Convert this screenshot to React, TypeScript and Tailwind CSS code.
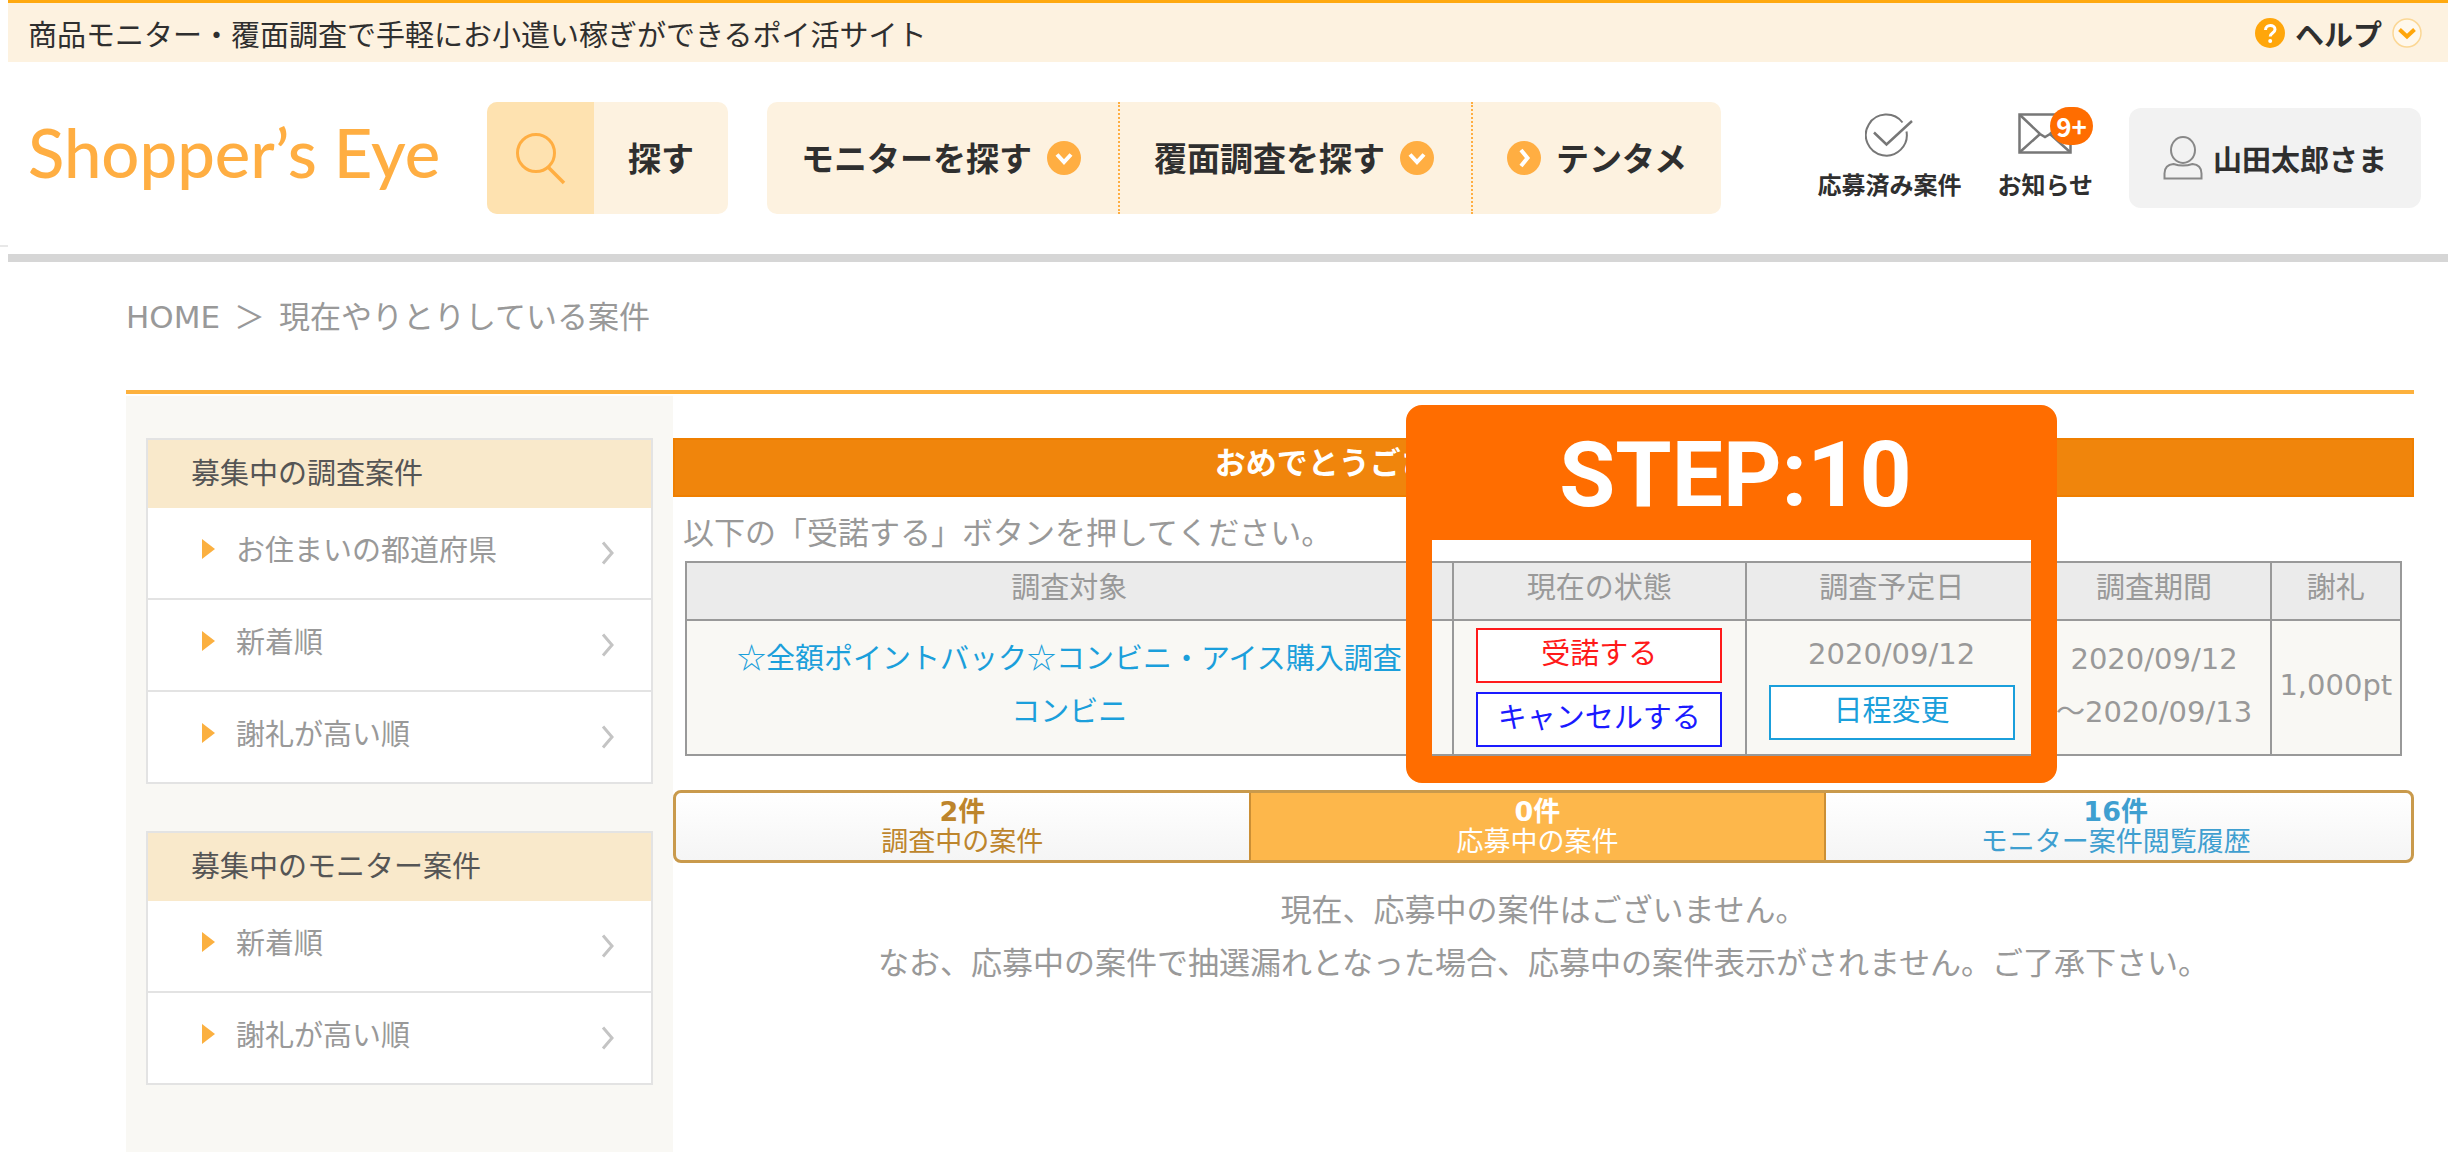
import React from "react";

const ORANGE = "#ffae42";

const menus = [
  {
    title: "募集中の調査案件",
    items: ["お住まいの都道府県", "新着順", "謝礼が高い順"],
  },
  {
    title: "募集中のモニター案件",
    items: ["新着順", "謝礼が高い順"],
  },
];

const CircleArrow = ({ direction }: { direction: "down" | "right" }) => (
  <svg viewBox="0 0 34 34" className="size-[34px] shrink-0" fill="none">
    <circle cx="17" cy="17" r="17" fill={ORANGE} />
    <path
      d={direction === "down" ? "M10 13.5l7 7.5 7-7.5" : "M14 9l6.5 8-6.5 8"}
      stroke="#fff"
      strokeWidth="4"
    />
  </svg>
);

const TopBar = () => (
  <div className="flex h-[62px] items-center justify-between border-t-[3px] border-[#ffa90f] bg-[#fdf2e0] pl-5 pr-[26px] text-[29px] leading-[36px]">
    <p>商品モニター・覆面調査で手軽にお小遣い稼ぎができるポイ活サイト</p>
    <button type="button" className="flex items-center gap-2.5 font-bold">
      <svg viewBox="0 0 30 30" className="size-[30px]" fill="none">
        <circle cx="15" cy="15" r="15" fill="#ffa60a" />
        <path
          d="M10.500 12c0-6 9.500-6 9.500-.5 0 3.500-4.800 3.500-4.800 7"
          stroke="#fff"
          strokeWidth="3"
        />
        <circle cx="15.200" cy="23" r="2" fill="#fff" />
      </svg>
      ヘルプ
      <svg viewBox="0 0 30 30" className="size-[30px]" fill="none">
        <circle cx="15" cy="15" r="14" fill="#fff8ec" stroke="#fbd795" strokeWidth="1.500" />
        <path d="M7.500 11.500l7.500 7 7.500-7" stroke="#ffa60a" strokeWidth="4" />
      </svg>
    </button>
  </div>
);

const Header = () => (
  <header className="flex h-[200px] items-center border-b-8 border-[#d6d6d6] pl-5 pr-[27px] font-bold">
    <a
      href="#"
      className="w-[459px] shrink-0 whitespace-nowrap pb-3 font-['Lato',sans-serif] text-[67px] leading-[80px] font-medium text-[#ffae42]"
    >
      Shopper’s Eye
    </a>

    <button
      type="button"
      className="flex h-28 shrink-0 items-stretch overflow-hidden rounded-[10px] bg-[#fdf2e0] text-[33px]"
    >
      <span className="flex w-[107px] items-center justify-center bg-[#fee2b0]">
        <svg viewBox="0 0 50 54" className="h-[54px] w-[50px]" fill="none" stroke={ORANGE} strokeWidth="3">
          <circle cx="20" cy="22" r="18.500" />
          <path d="M32 36l16 16" strokeWidth="3.500" />
        </svg>
      </span>
      <span className="flex w-[134px] items-center justify-center">探す</span>
    </button>

    <nav className="ml-[39px] flex h-28 shrink-0 rounded-[10px] bg-[#fdf2e0] text-[33px]">
      <button type="button" className="flex items-center gap-[15px] pl-[34px] pr-[37px]">
        モニターを探す
        <CircleArrow direction="down" />
      </button>
      <button
        type="button"
        className="flex items-center gap-[15px] border-l-2 border-dotted border-[#ffae42] pl-[34px] pr-[37px]"
      >
        覆面調査を探す
        <CircleArrow direction="down" />
      </button>
      <a
        href="#"
        className="flex items-center gap-[15px] border-l-2 border-dotted border-[#ffae42] px-[34px]"
      >
        <CircleArrow direction="right" />
        テンタメ
      </a>
    </nav>

    <div className="ml-auto flex shrink-0 items-center gap-9 text-[24px] leading-[30px]">
      <a href="#" className="flex flex-col items-center gap-3 pb-1">
        <svg viewBox="0 0 48 44" className="h-11 w-12" fill="none" stroke="#777" strokeWidth="2">
          <path d="M37.500 9.500a20.500 20.500 0 1 0 4 9" />
          <path d="M9 19.500l12.500 12L47 8" strokeWidth="2.500" />
        </svg>
        応募済み案件
      </a>
      <a href="#" className="relative flex flex-col items-center gap-3 pb-1">
        <svg viewBox="0 0 54 44" className="h-11 w-[54px]" fill="none" stroke="#777" strokeWidth="2.500">
          <rect x="1.500" y="1.500" width="51" height="38" />
          <path d="M2 2l20 19 5 3 5-3L52 2M2 39l20-18M52 39L32 21" />
        </svg>
        お知らせ
        <span className="absolute -top-1.5 right-0 flex h-[38px] w-[43px] items-center justify-center rounded-full bg-[#ff6d00] text-[26px] text-white">
          9+
        </span>
      </a>
      <button
        type="button"
        className="flex h-[100px] items-center gap-2.5 rounded-[12px] bg-[#f2f2f2] px-[34px] text-[29px]"
      >
        <svg viewBox="0 0 40 44" className="h-11 w-10" fill="none" stroke="#888" strokeWidth="2">
          <ellipse cx="20" cy="14" rx="12" ry="13" />
          <path d="M1.500 42.500v-5c0-6 4-9 9-9.500 6 2 13 2 19 0 5 .5 9 3.500 9 9.500v5z" />
        </svg>
        山田太郎さま
      </button>
    </div>
  </header>
);

const Sidebar = () => (
  <aside className="flex w-[547px] shrink-0 flex-col gap-[47px] bg-[#f9f8f4] px-5 pt-[42px] pb-[67px] text-[29px] leading-[36px]">
    {menus.map((menu) => (
      <section key={menu.title} className="border-x-2 border-t-2 border-[#e3e3e3] bg-white">
        <h2 className="bg-[#f9e9cb] py-4 pl-[43px] text-[#555]">{menu.title}</h2>
        <ul>
          {menu.items.map((item) => (
            <li key={item}>
              <a
                href="#"
                className="flex h-[92px] items-center border-b-2 border-[#e3e3e3] pl-[54px] pr-9"
              >
                <svg viewBox="0 0 13 20" className="mb-2 h-5 w-[13px]" fill="#fbb040">
                  <path d="M0 0l13 10-13 10z" />
                </svg>
                <span className="mb-1 ml-[21px] grow">{item}</span>
                <svg viewBox="0 0 14 24" className="h-6 w-3.5" fill="none" stroke="#c4c4c4" strokeWidth="3">
                  <path d="M2 1.500l9 10.500-9 10.500" />
                </svg>
              </a>
            </li>
          ))}
        </ul>
      </section>
    ))}
  </aside>
);

const cell = "border-2 border-[#999] p-0 text-center font-normal";
const headCell = "border-2 border-[#999] px-0 pt-0 pb-1.5 text-center font-normal";
const cellButton = "mx-auto block h-[55px] w-[246px] border-2 bg-white pb-1";

const SurveyTable = () => (
  <div className="relative mx-3">
    <table className="w-full table-fixed border-collapse text-[29px] leading-[53px]">
      <thead>
        <tr className="h-[58px] bg-[#ebebeb] leading-[46px]">
          <th className={`${headCell} w-[44.7%]`}>調査対象</th>
          <th className={`${headCell} w-[17.1%]`}>現在の状態</th>
          <th className={`${headCell} w-[17%]`}>調査予定日</th>
          <th className={`${headCell} w-[13.6%]`}>調査期間</th>
          <th className={`${headCell} w-[7.6%]`}>謝礼</th>
        </tr>
      </thead>
      <tbody>
        <tr className="h-[135px] bg-[#f9f8f4]">
          <td className={cell}>
            <a href="#" className="mb-2.5 block font-['Noto_Sans_CJK_JP',sans-serif] text-[#1b9fdb]">
              ☆全額ポイントバック☆コンビニ・アイス購入調査
              <br />
              コンビニ
            </a>
          </td>
          <td className={cell}>
            <div className="flex flex-col gap-[9px] leading-[48px]">
              <button type="button" className={`${cellButton} border-[#ff1a1a] text-[#ff1a1a]`}>
                受諾する
              </button>
              <button type="button" className={`${cellButton} border-[#1a1aff] text-[#1a1aff]`}>
                キャンセルする
              </button>
            </div>
          </td>
          <td className={cell}>
            <div className="pb-1">2020/09/12</div>
            <button
              type="button"
              className={`${cellButton} mb-2 border-[#1b9fdb] leading-[48px] text-[#1b9fdb]`}
            >
              日程変更
            </button>
          </td>
          <td className={cell}>
            <div className="mb-1">
              2020/09/12
              <br />
              ～2020/09/13
            </div>
          </td>
          <td className={cell}>
            <div className="mb-1">1,000pt</div>
          </td>
        </tr>
      </tbody>
    </table>

    {/* step callout framing the status and date columns */}
    <div className="pointer-events-none absolute -top-[156px] left-[42%] h-[378px] w-[37.9%] rounded-[16px] border-x-[26px] border-t-[135px] border-b-[27px] border-[#ff6d00]">
      <p className="absolute inset-x-0 -top-[119px] pl-2 text-center font-['Roboto',sans-serif] text-[91px] leading-[108px] font-bold text-white">
        STEP:10
      </p>
    </div>
  </div>
);

const Tabs = () => (
  <div
    role="tablist"
    className="mt-[34px] flex h-[73px] overflow-hidden rounded-[8px] border-[3px] border-[#c99a4c] bg-linear-to-b from-white to-[#f5f5f5] text-[27px] leading-[30px]"
  >
    <button type="button" role="tab" className="w-[33%] text-[#bd852c]">
      <b className="block">2件</b>
      調査中の案件
    </button>
    <button
      type="button"
      role="tab"
      aria-selected="true"
      className="w-[33.3%] border-x-2 border-[#cb8f35] bg-[#fdb74b] text-white"
    >
      <b className="block">0件</b>
      応募中の案件
    </button>
    <button type="button" role="tab" className="grow pr-1.5 text-[#3f9fd0]">
      <b className="block">16件</b>
      モニター案件閲覧履歴
    </button>
  </div>
);

const App = () => {
  return (
    <div className="flex bg-white font-['Noto_Sans_CJK_JP',sans-serif] text-[#2f2f2f]">
      <div className="mt-[245px] h-0.5 w-2 shrink-0 bg-[#e8e8e8]" />
      <div className="min-w-0 grow">
        <TopBar />
        <Header />
        <div className="pl-[118px] pr-[34px] font-['DejaVu_Sans','Noto_Sans_CJK_JP',sans-serif] text-[#999]">
          <nav className="flex h-[132px] gap-3.5 border-b-4 border-[#fdb13d] pt-9 text-[31px] leading-[38px]">
            <a href="#">HOME</a>
            <span>＞</span>
            <span>現在やりとりしている案件</span>
          </nav>
          <div className="flex pt-0.5">
            <Sidebar />
            <main className="min-w-0 grow pt-[42px]">
              <h1 className="h-[59px] border-2 border-[#ef7f00] bg-[#f0850c] pl-[31%] text-[31px] leading-[46px] font-bold text-white">
                おめでとうございます！
              </h1>
              <p className="ml-2.5 h-16 pt-4 text-[31px] leading-[40px]">
                以下の「受諾する」ボタンを押してください。
              </p>
              <SurveyTable />
              <Tabs />
              <p className="mt-[21px] text-center text-[31px] leading-[53px]">
                現在、応募中の案件はございません。
                <br />
                なお、応募中の案件で抽選漏れとなった場合、応募中の案件表示がされません。ご了承下さい。
              </p>
            </main>
          </div>
        </div>
      </div>
    </div>
  );
};

export default App;
